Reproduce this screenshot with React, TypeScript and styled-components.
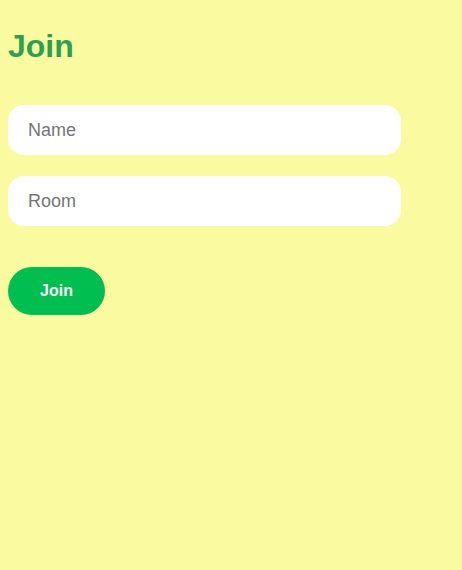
import React from "react";
import styled, { createGlobalStyle } from "styled-components";

const Global = createGlobalStyle`
  html, body { background: #fafaa0; }
  body { margin: 8px; font-family: "Liberation Sans", Arial, sans-serif; }
`;

const Page = styled.div`
  display: flex;
  flex-direction: column;
  max-width: 393px;
`;

const Title = styled.h1`
  margin: 20px 0 40px;
  font-size: 32px;
  font-weight: 700;
  color: #2da050;
  line-height: 37px;
`;

const Form = styled.form`
  display: flex;
  flex-direction: column;
  gap: 21px;
`;

const Field = styled.input`
  box-sizing: border-box;
  width: 100%;
  height: 50px;
  border: none;
  border-radius: 16px;
  background: #ffffff;
  padding: 0 20px;
  font-family: "Liberation Sans", Arial, sans-serif;
  font-size: 18px;
  color: #333;
  outline: none;
  &::placeholder { color: #757575; }
`;

const Button = styled.button`
  align-self: flex-start;
  margin-top: 20px;
  height: 48px;
  width: 97px;
  border: none;
  border-radius: 24px;
  background: #00bf50;
  color: #ffffff;
  font-family: "Liberation Sans", Arial, sans-serif;
  font-size: 16px;
  font-weight: 700;
  cursor: pointer;
`;

export default function App() {
  return (
    <>
      <Global />
      <Page>
        <Title>Join</Title>
        <Form onSubmit={(e) => e.preventDefault()}>
          <Field placeholder="Name" />
          <Field placeholder="Room" />
          <Button type="submit">Join</Button>
        </Form>
      </Page>
    </>
  );
}
